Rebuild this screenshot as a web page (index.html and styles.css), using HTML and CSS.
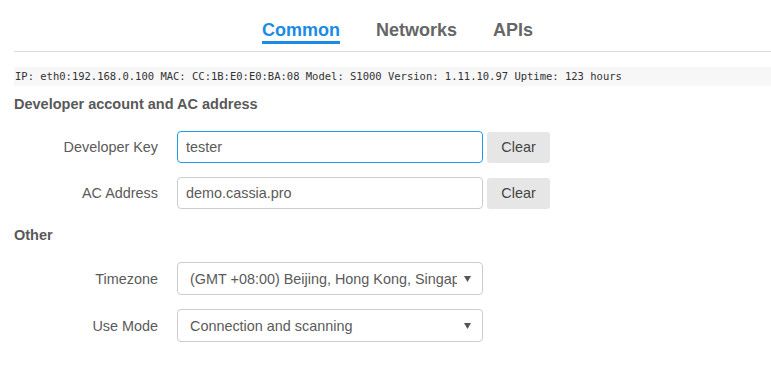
FILE: index.html
```html
<!DOCTYPE html>
<html>
<head>
<meta charset="utf-8">
<link rel="stylesheet" href="styles.css">
</head>
<body>
<div class="page">
  <nav class="tabs">
    <a class="tab active">Common</a>
    <a class="tab">Networks</a>
    <a class="tab">APIs</a>
  </nav>
  <div class="info">IP: eth0:192.168.0.100 MAC: CC:1B:E0:E0:BA:08 Model: S1000 Version: 1.11.10.97 Uptime: 123 hours</div>

  <h3 class="section">Developer account and AC address</h3>
  <div class="rows">
    <div class="row">
      <label class="label">Developer Key</label>
      <input class="field focus" type="text" value="tester">
      <button class="btn">Clear</button>
    </div>
    <div class="row">
      <label class="label">AC Address</label>
      <input class="field" type="text" value="demo.cassia.pro">
      <button class="btn">Clear</button>
    </div>
  </div>

  <h3 class="section other">Other</h3>
  <div class="rows sel-rows">
    <div class="row">
      <label class="label">Timezone</label>
      <select class="field select">
        <option>(GMT +08:00) Beijing, Hong Kong, Singapore</option>
      </select>
    </div>
    <div class="row">
      <label class="label">Use Mode</label>
      <select class="field select">
        <option>Connection and scanning</option>
      </select>
    </div>
  </div>
</div>
</body>
</html>
```
FILE: styles.css
```css
html, body {
  margin: 0;
  padding: 0;
  background: #fff;
}
body {
  font-family: "Liberation Sans", Arial, sans-serif;
  color: #555;
}
.page {
  padding-left: 14px;
}
.tabs {
  display: flex;
  justify-content: center;
  gap: 36px;
  padding-left: 10px;
  padding-bottom: 7px;
  border-bottom: 1px solid #dddddd;
}
.tab {
  font-size: 18px;
  font-weight: bold;
  line-height: 20px;
  padding-top: 20px;
  padding-bottom: 1px;
  border-bottom: 3px solid transparent;
  color: #666;
}
.tab.active {
  color: #1a8ce6;
  border-bottom-color: #1a8ce6;
}
.info {
  margin-top: 15px;
  height: 19px;
  line-height: 19px;
  background: #f7f7f7;
  font-family: "DejaVu Sans Mono", monospace;
  font-size: 10.5px;
  color: #333;
  padding-left: 1px;
  white-space: nowrap;
}
.section {
  margin: 8px 0 0 0;
  font-size: 14.5px;
  line-height: 20px;
  font-weight: bold;
  color: #595959;
}
.section.other {
  margin-top: 16px;
}
.rows {
  display: flex;
  flex-direction: column;
  gap: 14px;
  margin-top: 17px;
}
.sel-rows {
  margin-top: 17px;
  gap: 14px;
}
.row {
  display: flex;
  align-items: center;
}
.label {
  width: 144px;
  text-align: right;
  font-size: 14.4px;
  color: #5a5a5a;
  margin-right: 19px;
}
.field {
  box-sizing: border-box;
  width: 306px;
  height: 32px;
  border: 1px solid #cccccc;
  border-radius: 4px;
  padding: 0 8px;
  font-family: "Liberation Sans", Arial, sans-serif;
  font-size: 14.4px;
  color: #5a5a5a;
  background: #fff;
  outline: none;
  margin: 0;
}
.field.focus {
  border-color: #1e9be8;
}
.select {
  -webkit-appearance: none;
  appearance: none;
  padding: 0 25px 0 12px;
  height: 33px;
  background-image: url("data:image/svg+xml;utf8,<svg xmlns='http://www.w3.org/2000/svg' width='7' height='6'><path d='M0 0h7L3.5 6z' fill='%23555'/></svg>");
  background-repeat: no-repeat;
  background-position: right 11px center;
}
.btn {
  box-sizing: border-box;
  margin-left: 4px;
  width: 63px;
  height: 31px;
  border: none;
  border-radius: 3px;
  background: #e6e6e6;
  font-family: "Liberation Sans", Arial, sans-serif;
  font-size: 14.4px;
  color: #444;
  padding: 0;
}
```
